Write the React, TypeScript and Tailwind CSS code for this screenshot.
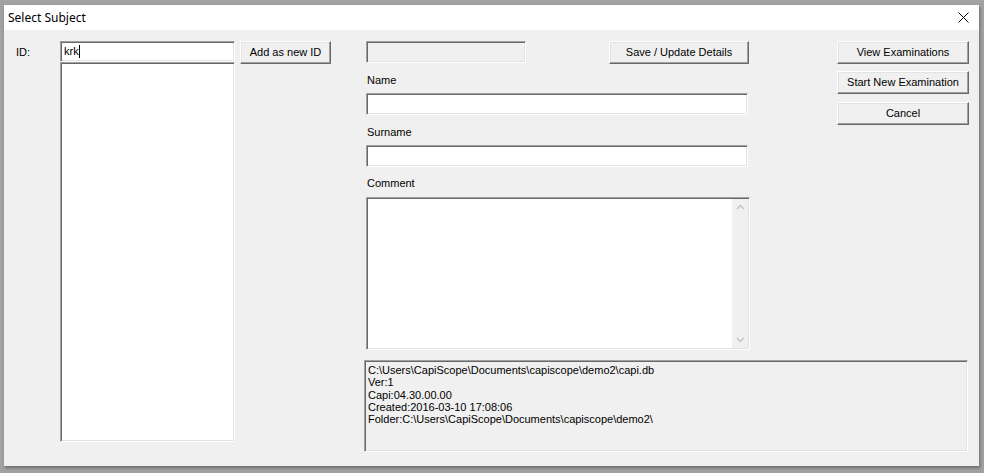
const ui = { fontFamily: '"Liberation Sans", Arial, sans-serif' };

// classic 3D edges
const sunken =
  'border border-t-[#a0a0a0] border-l-[#a0a0a0] border-r-white border-b-white shadow-[inset_1px_1px_0_#696969,inset_-1px_-1px_0_#e3e3e3]';
const raised =
  'border border-t-white border-l-white border-r-[#696969] border-b-[#696969] shadow-[inset_-1px_-1px_0_#a0a0a0,inset_1px_1px_0_#e3e3e3] bg-[#f0f0f0] text-[11px] text-black flex items-center justify-center';

function Btn({ label, className = '' }: { label: string; className?: string }) {
  return (
    <button type="button" className={`${raised} ${className}`} style={ui}>
      {label}
    </button>
  );
}

function Chevron({ up }: { up?: boolean }) {
  return (
    <svg width="9" height="6" viewBox="0 0 9 6">
      <path
        d={up ? 'M1 5 L4.5 1.5 L8 5' : 'M1 1 L4.5 4.5 L8 1'}
        fill="none"
        stroke="#c2c2c2"
        strokeWidth="1.4"
      />
    </svg>
  );
}

export default function App() {
  return (
    <div className="w-[984px] h-[473px] bg-[#a2a2a2] pt-[5px] pl-[4px] overflow-hidden">
      <div className="w-[975px] h-[461px] flex flex-col bg-[#f0f0f0] shadow-[1px_2px_3px_rgba(0,0,0,0.35)]">
        {/* Title bar */}
        <div className="h-[25px] bg-white flex items-center justify-between pl-[4px] pr-[10px]">
          <span className="text-[12px] text-black" style={{ fontFamily: '"Noto Sans", "Open Sans", sans-serif' }}>
            Select Subject
          </span>
          <svg width="11" height="11" viewBox="0 0 11 11">
            <path d="M0.5 0.5 L10.5 10.5 M10.5 0.5 L0.5 10.5" stroke="#000" strokeWidth="1" />
          </svg>
        </div>

        {/* Body */}
        <div className="flex-1 flex pt-[11px] text-[11px] text-black" style={ui}>
          <div className="w-[56px] pl-[12px] pt-[3px]">ID:</div>

          <div className="w-[175px] flex flex-col">
            <div className={`h-[21px] bg-white pl-[3px] flex items-center ${sunken}`}>
              <span>krk</span>
              <span className="w-px h-[13px] bg-black" />
            </div>
            <div className={`h-[380px] bg-white ${sunken}`} />
          </div>

          <Btn label="Add as new ID" className="ml-[5px] w-[91px] h-[23px]" />

          <div className="ml-[35px] flex flex-col">
            <div className="flex">
              {/* Middle column */}
              <div className="w-[384px] flex flex-col">
                <div className="flex items-start">
                  <div className={`w-[160px] h-[22px] bg-[#f0f0f0] ${sunken}`} />
                  <Btn label="Save / Update Details" className="ml-[83px] w-[140px] h-[23px]" />
                </div>
                <div className="mt-[10px] h-[13px] leading-[13px] pl-[1px]">Name</div>
                <div className={`mt-[6px] w-[382px] h-[22px] bg-white ${sunken}`} />
                <div className="mt-[11px] h-[13px] leading-[13px] pl-[1px]">Surname</div>
                <div className={`mt-[6px] w-[382px] h-[22px] bg-white ${sunken}`} />
                <div className="mt-[10px] h-[13px] leading-[13px] pl-[1px]">Comment</div>
                <div className={`mt-[7px] w-[384px] h-[153px] bg-white flex justify-end ${sunken}`}>
                  <div className="w-[16px] my-[1px] mr-[1px] bg-[#f0f0f0] flex flex-col items-center justify-between py-[5px]">
                    <Chevron up />
                    <Chevron />
                  </div>
                </div>
              </div>

              {/* Right column */}
              <div className="ml-[87px] w-[132px] flex flex-col">
                <Btn label="View Examinations" className="h-[23px]" />
                <Btn label="Start New Examination" className="mt-[7px] h-[23px]" />
                <Btn label="Cancel" className="mt-[8px] h-[23px]" />
              </div>
            </div>

            {/* Info box */}
            <div
              className={`mt-[10px] -ml-[2px] w-[604px] h-[92px] bg-[#f0f0f0] px-[3px] pt-[3px] leading-[12.3px] ${sunken}`}
            >
              <div>C:\Users\CapiScope\Documents\capiscope\demo2\capi.db</div>
              <div>Ver:1</div>
              <div>Capi:04.30.00.00</div>
              <div>Created:2016-03-10 17:08:06</div>
              <div>Folder:C:\Users\CapiScope\Documents\capiscope\demo2\</div>
            </div>
          </div>
        </div>
      </div>
    </div>
  );
}
